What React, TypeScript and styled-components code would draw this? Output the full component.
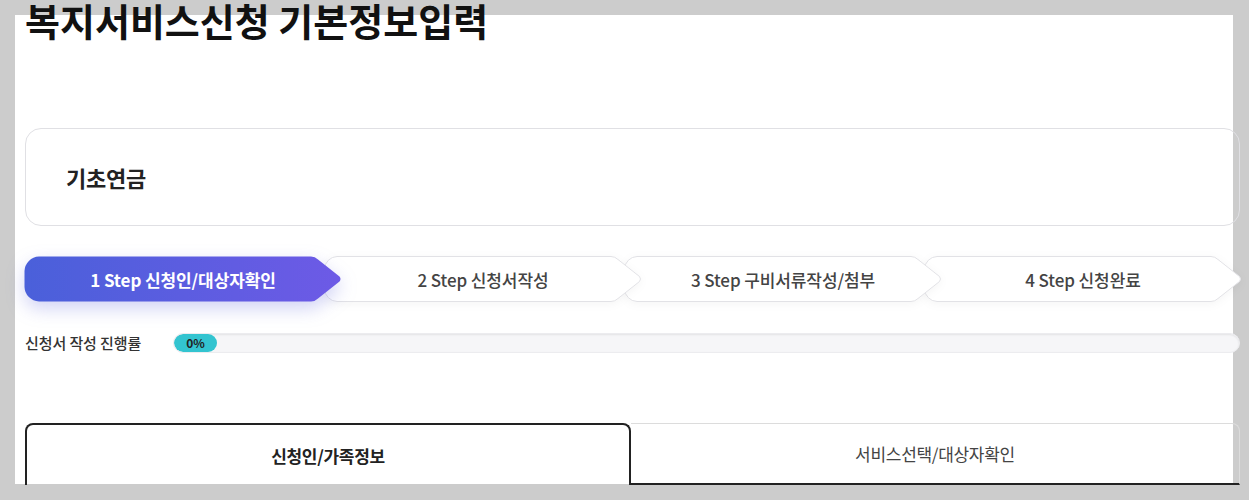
import React from 'react'
import styled, { createGlobalStyle } from 'styled-components'

const GlobalStyle = createGlobalStyle`
    html, body {
        margin: 0;
        padding: 0;
        background: #cccccc;
        font-family: "Noto Sans CJK KR", "Noto Sans", sans-serif;
    }
`

const steps = [
    '1 Step 신청인/대상자확인',
    '2 Step 신청서작성',
    '3 Step 구비서류작성/첨부',
    '4 Step 신청완료',
]

const STEP_W = 318
const STEP_H = 46

const stepPath = (w: number, h: number, r: number) => {
    const m = h / 2
    return `M ${r} 0.5 H ${w - 31} Q ${w - 27} 0.5 ${w - 24} 3.5 L ${w - 2.5} ${m - 2.5} Q ${w - 0.5} ${m} ${w - 2.5} ${m + 2.5} L ${w - 24} ${h - 3.5} Q ${w - 27} ${h - 0.5} ${w - 31} ${h - 0.5} H ${r} A ${r} ${r} 0 0 1 0.5 ${h - r} V ${r} A ${r} ${r} 0 0 1 ${r} 0.5 Z`
}

const StepShape = ({ active }: { active: boolean }) => (
    <ShapeSvg width={STEP_W} height={STEP_H} $active={active}>
        <defs>
            <linearGradient id="stepGrad" x1="0" y1="0" x2="1" y2="0">
                <stop offset="0%" stopColor="#4a60da" />
                <stop offset="100%" stopColor="#6d5ae6" />
            </linearGradient>
        </defs>
        <path
            d={stepPath(STEP_W, STEP_H, active ? 15 : 13)}
            fill={active ? 'url(#stepGrad)' : '#ffffff'}
            stroke={active ? 'none' : '#e2e2e6'}
            strokeWidth={1}
        />
    </ShapeSvg>
)

const App = () => {
    const [tab, setTab] = React.useState(0)
    const progress = 0
    return (
        <>
            <GlobalStyle />
            <Page>
                <Panel>
                    <Title>복지서비스신청 기본정보입력</Title>
                    <ServiceCard>
                        <ServiceName>기초연금</ServiceName>
                    </ServiceCard>
                    <StepList>
                        {steps.map((label, i) => (
                            <Step key={label} $index={i}>
                                <StepShape active={i === 0} />
                                <StepLabel $active={i === 0}>{label}</StepLabel>
                            </Step>
                        ))}
                    </StepList>
                    <ProgressRow>
                        <ProgressLabel>신청서 작성 진행률</ProgressLabel>
                        <ProgressTrack>
                            <ProgressFill style={{ width: `calc(${progress}% + 43px)` }}>
                                {progress}%
                            </ProgressFill>
                        </ProgressTrack>
                    </ProgressRow>
                    <Tabs>
                        <Tab $active={tab === 0} $first onClick={() => setTab(0)}>신청인/가족정보</Tab>
                        <Tab $active={tab === 1} onClick={() => setTab(1)}>서비스선택/대상자확인</Tab>
                    </Tabs>
                </Panel>
            </Page>
        </>
    )
}

export default App

const Page = styled.div`
    padding: 15px 16px 16px 15px;
    height: 500px;
    box-sizing: border-box;
`

const Panel = styled.div`
    display: flow-root;
    width: 1218px;
    height: 469px;
    background: #ffffff;
    padding: 0 10px;
    box-sizing: border-box;
    overflow: visible;
`

const Title = styled.h1`
    margin: -14px 0 0 0;
    width: 1215px;
    height: 38px;
    font-size: 38px;
    line-height: 38px;
    font-weight: 700;
    color: #111111;
`

const ServiceCard = styled.div`
    margin-top: 89px;
    width: 1215px;
    height: 98px;
    box-sizing: border-box;
    border: 1px solid #e0e0e4;
    border-radius: 16px;
    display: flex;
    align-items: center;
    padding: 0 40px;
`

const ServiceName = styled.div`
    font-size: 22px;
    font-weight: 700;
    color: #222222;
    letter-spacing: -0.2px;
`

const StepList = styled.div`
    margin-top: 30px;
    width: 1218px;
    margin-left: -1px;
    display: flex;
`

const Step = styled.div<{ $index: number }>`
    position: relative;
    flex: 0 0 ${STEP_W}px;
    height: ${STEP_H}px;
    margin-left: ${p => (p.$index === 0 ? 0 : -18)}px;
    z-index: ${p => 10 - p.$index};
    display: flex;
    align-items: center;
    justify-content: center;
`

const ShapeSvg = styled.svg<{ $active: boolean }>`
    position: absolute;
    left: 0;
    top: 0;
    overflow: visible;
    filter: ${p => (p.$active
        ? 'drop-shadow(0 7px 9px rgba(90, 96, 220, 0.28))'
        : 'drop-shadow(0 2px 4px rgba(0, 0, 0, 0.04))')};
`

const StepLabel = styled.span<{ $active: boolean }>`
    position: relative;
    font-size: 17px;
    font-weight: ${p => (p.$active ? 700 : 500)};
    color: ${p => (p.$active ? '#ffffff' : '#444444')};
    letter-spacing: -0.1px;
`

const ProgressRow = styled.div`
    margin-top: 30px;
    width: 1215px;
    display: flex;
    align-items: center;
`

const ProgressLabel = styled.div`
    flex: 0 0 148px;
    font-size: 15px;
    font-weight: 500;
    color: #333333;
    letter-spacing: -0.1px;
`

const ProgressTrack = styled.div`
    flex: 1;
    height: 20px;
    border-radius: 10px;
    background: #f6f6f8;
    box-shadow: inset 0 1px 2px rgba(0, 0, 0, 0.08);
    border: 1px solid #ececef;
    box-sizing: border-box;
    overflow: hidden;
    display: flex;
`

const ProgressFill = styled.div`
    height: 100%;
    border-radius: 10px;
    background: #33c4d0;
    font-size: 12px;
    font-weight: 700;
    color: #222222;
    display: flex;
    align-items: center;
    justify-content: center;
`

const Tabs = styled.div`
    margin-top: 70px;
    width: 1215px;
    display: flex;
`

const Tab = styled.div<{ $active: boolean; $first?: boolean }>`
    flex: ${p => (p.$first ? '0 0 606px' : '1')};
    height: 62px;
    box-sizing: border-box;
    display: flex;
    align-items: center;
    justify-content: center;
    font-size: 17px;
    letter-spacing: -0.3px;
    cursor: pointer;
    border-radius: 8px 8px 0 0;
    ${p => (p.$active
        ? `
        border: 2px solid #222222;
        border-bottom: none;
        font-weight: 700;
        color: #222222;
        `
        : `
        border: 1px solid #dcdcdc;
        border-left: none;
        border-bottom: 2px solid #222222;
        border-radius: 0 8px 0 0;
        font-weight: 400;
        color: #444444;
        `)}
`
